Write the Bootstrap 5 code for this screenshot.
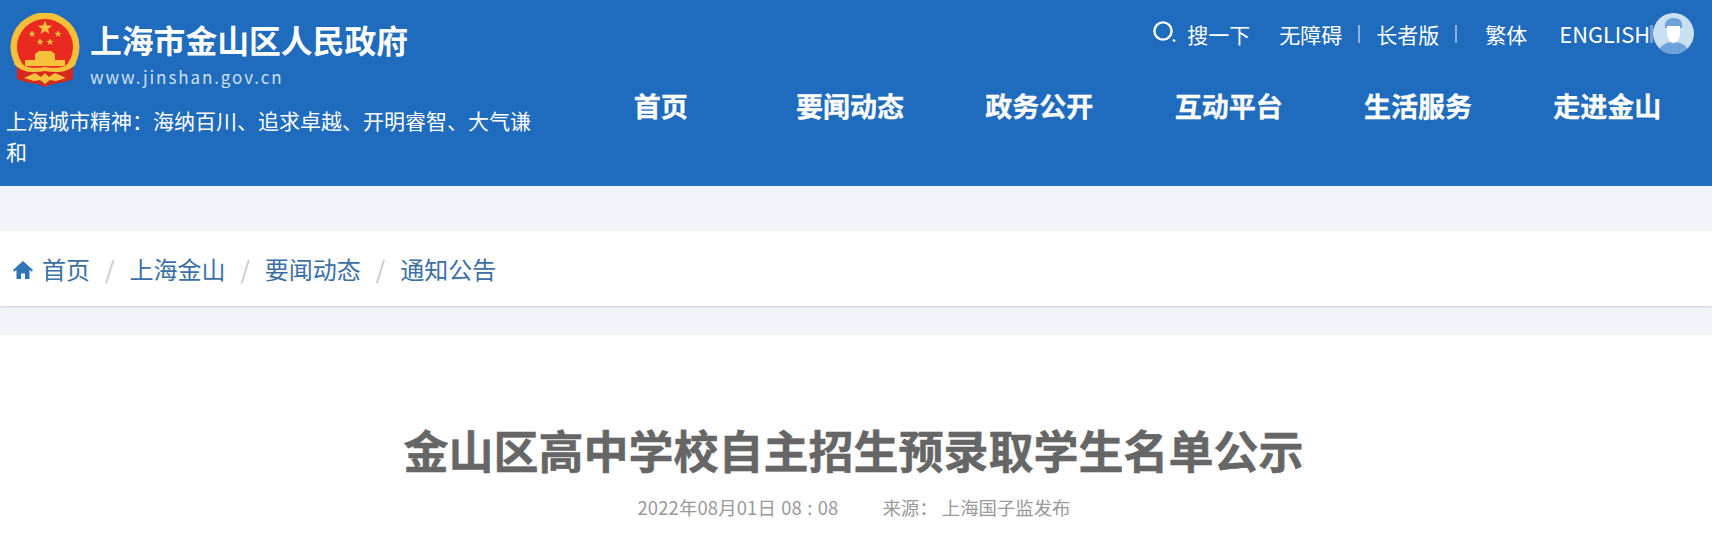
<!DOCTYPE html>
<html lang="zh-CN">
<head>
  <meta charset="UTF-8" />
  <meta name="viewport" content="width=device-width, initial-scale=1.0"/>
  <title>金山区高中学校自主招生预录取学生名单公示</title>
  <link href="https://cdn.jsdelivr.net/npm/bootstrap@5.3.0/dist/css/bootstrap.min.css" rel="stylesheet"/>
  <style>
    body {
      font-family: "Noto Sans CJK SC", "Liberation Sans", sans-serif;
      background: #fff;
      color: #666;
    }

    /* Header */
    .site-head {
      height: 186px;
      background: #1f6bbd;
      color: #fff;
    }
    .head-left {
      width: 566px;
      flex: none;
    }
    .brand-row {
      padding: 13px 0 0 10px;
    }
    .brand-logo {
      width: 70px;
      height: 74px;
      flex: none;
    }
    .brand-text {
      margin-left: 10px;
    }
    .brand-name {
      font-size: 31.8px;
      font-weight: 700;
      line-height: 40px;
      margin-top: 6px;
    }
    .brand-url {
      font-size: 17px;
      line-height: 24px;
      letter-spacing: 1.9px;
      margin-top: 6px;
      color: #cfe0f3;
    }
    .spirit {
      font-size: 21px;
      line-height: 31px;
      width: 540px;
      padding-left: 6px;
      margin: 16px 0 0;
    }

    /* Top links */
    .head-right {
      flex: 1;
      min-width: 0;
      padding-right: 10px;
    }
    .top-links {
      height: 54px;
      padding: 13px 8px 0 0;
      font-size: 21px;
      line-height: 46px;
    }
    .top-links a {
      color: #fff;
      text-decoration: none;
    }
    .search-ico {
      width: 24px;
      height: 22px;
      margin: 0 10px 3px 0;
    }
    .lnk-gap {
      margin-left: 29px;
    }
    .lnk-sep {
      width: 2px;
      height: 18px;
      background: #8db4de;
      margin: 0 16px;
    }
    .lnk-sep-wide {
      margin-right: 12px;
    }
    .lnk-en {
      font-size: 21.8px;
      margin-left: 32px;
    }
    .lnk-sep-end {
      width: 3px;
      height: 18px;
      background: #6f9fd6;
    }
    .avatar {
      width: 41px;
      height: 41px;
      flex: none;
    }

    /* Main nav */
    .main-nav .nav-link {
      color: #fff;
      font-size: 27px;
      font-weight: 700;
      line-height: 40px;
      padding: 32px 0 0;
      text-align: center;
      -webkit-text-stroke: .3px #fff;
    }

    /* Breadcrumb */
    .crumb-wrap {
      background: #f0f3f8;
      padding: 45px 0 29px;
    }
    .crumb-bar {
      height: 75px;
      background: #fff;
      box-shadow: 0 1px 2px rgba(0, 0, 0, .14);
      padding-left: 13px;
    }
    .crumb-bar .breadcrumb {
      --bs-breadcrumb-divider-color: #c8c8c8;
      --bs-breadcrumb-item-padding-x: 15px;
      font-size: 24px;
      line-height: 36px;
      margin: 0;
    }
    .crumb-bar .breadcrumb-item + .breadcrumb-item::before {
      padding-right: 15px;
    }
    .crumb-bar a {
      color: #3b70a7;
      text-decoration: none;
    }
    .home-ico {
      width: 20px;
      height: 18px;
      margin: 0 9px 4px 0;
    }

    /* Article head */
    .art-title {
      color: #666;
      font-size: 45px;
      font-weight: 700;
      line-height: 60px;
      margin: 0;
      padding: 85px 5px 0 0;
      -webkit-text-stroke: .5px #666;
    }
    .art-meta {
      color: #999;
      font-size: 18.4px;
      line-height: 26px;
      margin: 14px 0 0;
      padding-right: 4px;
    }
    .meta-date {
      letter-spacing: .15px;
      word-spacing: 1px;
    }
    .meta-src {
      margin-left: 44px;
    }
  </style>
</head>
<body>

<!-- Header -->
<header class="site-head d-flex">
  <div class="head-left">
    <div class="brand-row d-flex">
      <svg class="brand-logo" viewBox="0 0 70 74">
        <defs>
          <polygon id="st" points="0,-5 1.3,-1.6 4.8,-1.5 2,.6 3,4 0,2 -3,4 -2,.6 -4.8,-1.5 -1.3,-1.6"/>
        </defs>
        <circle cx="35" cy="34" r="34.5" fill="#f6bf3a"/>
        <circle cx="35" cy="34" r="28" fill="#ea2a20"/>
        <g fill="#f6c23c">
          <use href="#st" transform="translate(35 15) scale(1.5)"/>
          <use href="#st" transform="translate(22 21) scale(.75)"/>
          <use href="#st" transform="translate(48 21) scale(.75)"/>
          <use href="#st" transform="translate(30 29) scale(.75)"/>
          <use href="#st" transform="translate(40 29) scale(.75)"/>
          <path d="M25 41 L29 38 H41 L45 41 V47 H25Z"/>
          <rect x="15" y="47" width="40" height="6"/>
        </g>
        <path d="M7 47 C12 57 24 59 35 57 C46 59 58 57 63 47 L63 66 C52 71 44 69 35 74 C26 69 18 71 7 66Z" fill="#d9281e"/>
        <g fill="#f6c23c">
          <path d="M6 46 C12 55 24 56 35 54 C46 56 58 55 64 46 L66 51 C58 60 46 60 35 58 C24 60 12 60 4 51Z"/>
          <path d="M14 65 L25 60 L31 64 L35 60 L39 64 L45 60 L56 65 L46 68 L40 67 L35 71 L30 67 L24 68Z"/>
        </g>
      </svg>
      <div class="brand-text">
        <div class="brand-name">上海市金山区人民政府</div>
        <div class="brand-url">www.jinshan.gov.cn</div>
      </div>
    </div>
    <p class="spirit">上海城市精神：海纳百川、追求卓越、开明睿智、大气谦和</p>
  </div>

  <div class="head-right">
    <div class="top-links d-flex justify-content-end align-items-center">
      <a href="#" class="d-flex align-items-center">
        <svg class="search-ico" viewBox="0 0 24 22" fill="none" stroke="#fff">
          <circle cx="10" cy="10" r="8.6" stroke-width="2.4"/>
          <path d="M20 18.5 L22 20.5" stroke-width="2"/>
        </svg>
        搜一下
      </a>
      <a href="#" class="lnk-gap">无障碍</a>
      <span class="lnk-sep"></span>
      <a href="#">长者版</a>
      <span class="lnk-sep lnk-sep-wide"></span>
      <a href="#" class="ms-3">繁体</a>
      <a href="#" class="lnk-en">ENGLISH</a>
      <span class="lnk-sep-end"></span>
      <svg class="avatar" viewBox="0 0 41 41">
        <defs><clipPath id="ac"><circle cx="20.5" cy="20.5" r="20.5"/></clipPath></defs>
        <g clip-path="url(#ac)">
          <rect width="41" height="41" fill="#c9dff2"/>
          <path d="M5 41 C6 32 13 29 20.5 29 C28 29 35 32 36 41Z" fill="#6ea3d8"/>
          <path d="M12 15 C11 7 16 5 21 5 C27 5 30 9 29 15 L27 15 L14 15Z" fill="#6ea3d8"/>
          <path d="M14 13 H27 V20 C27 27 23 30 20.5 30 C18 30 14 27 14 20Z" fill="#fff"/>
        </g>
      </svg>
    </div>
    <nav class="main-nav nav nav-justified">
      <a class="nav-link" href="#">首页</a>
      <a class="nav-link" href="#">要闻动态</a>
      <a class="nav-link" href="#">政务公开</a>
      <a class="nav-link" href="#">互动平台</a>
      <a class="nav-link" href="#">生活服务</a>
      <a class="nav-link" href="#">走进金山</a>
    </nav>
  </div>
</header>

<!-- Breadcrumb -->
<div class="crumb-wrap">
  <div class="crumb-bar d-flex align-items-center">
    <ol class="breadcrumb">
      <li class="breadcrumb-item">
        <a href="#">
          <svg class="home-ico" viewBox="0 0 20 18" fill="#2f75b5">
            <path d="M10 0 L20 9 L18.8 10.8 L16.5 8.8 V18 H12 V12.5 H8 V18 H3.5 V8.8 L1.2 10.8 L0 9Z"/>
          </svg>首页</a>
      </li>
      <li class="breadcrumb-item"><a href="#">上海金山</a></li>
      <li class="breadcrumb-item"><a href="#">要闻动态</a></li>
      <li class="breadcrumb-item"><a href="#">通知公告</a></li>
    </ol>
  </div>
</div>

<!-- Article head -->
<main class="text-center">
  <h1 class="art-title">金山区高中学校自主招生预录取学生名单公示</h1>
  <p class="art-meta"><span class="meta-date">2022年08月01日 08 : 08</span><span class="meta-src">来源：&nbsp;上海国子监发布</span></p>
</main>

<script src="https://cdn.jsdelivr.net/npm/bootstrap@5.3.0/dist/js/bootstrap.bundle.min.js"></script>
</body>
</html>
